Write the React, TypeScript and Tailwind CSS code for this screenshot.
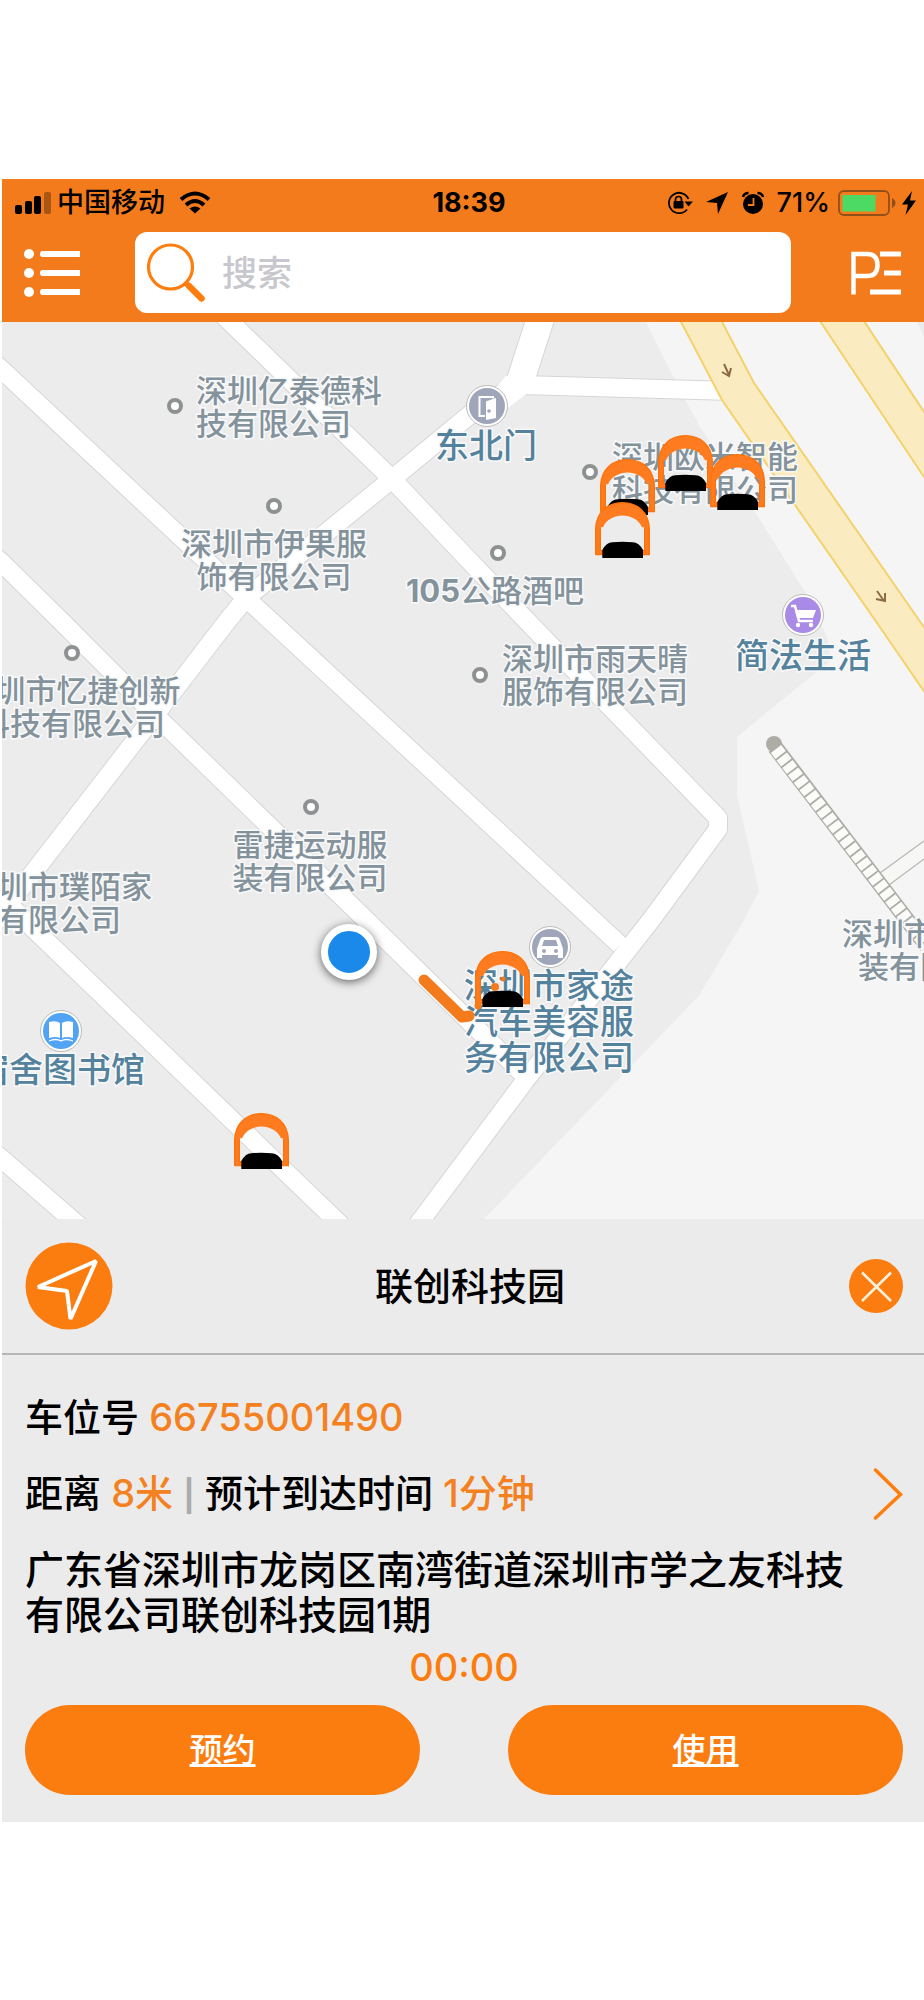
import { useState } from "react";

// 地图道路中心线
const roads = [
  "M-10 39 L0 48 L244 276 L460 476 L618 623",
  "M220 -8 L390 157 L460 231 L524 298 L716 496 V507 L649 598 L522 760 L411 909",
  "M-10 232 L0 241 L58 298 L153 393 L364 598 L522 753",
  "M518 60 L470 91 L390 157 L244 276 L226 298 L153 393 L-10 604",
  "M-10 567 L0 576 L35 610 L345 909",
  "M-10 829 L0 837 L83 909",
  "M520 63 L730 69",
];

const dots = [
  [173, 84],
  [272, 184],
  [496, 231],
  [588, 150],
  [70, 331],
  [309, 485],
  [478, 353],
];

const labels = [
  { x: 194, y: 52, lines: ["深圳亿泰德科", "技有限公司"], left: true },
  { x: 272, y: 205, lines: ["深圳市伊果服", "饰有限公司"] },
  { x: 500, y: 320, lines: ["深圳市雨天晴", "服饰有限公司"], left: true },
  { x: 610, y: 118, lines: ["深圳欧米智能", "科技有限公司"], left: true },
  { x: 70, y: 352, lines: ["深圳市忆捷创新", "科技有限公司"] },
  { x: 308, y: 506, lines: ["雷捷运动服", "装有限公司"] },
  { x: 57, y: 548, lines: ["深圳市璞陌家", "有限公司"] },
];

const places = [
  { x: 484, y: 106, lines: ["东北门"] },
  { x: 801, y: 316, lines: ["简法生活"] },
  { x: 547, y: 646, lines: ["深圳市家途", "汽车美容服", "务有限公司"] },
  { x: 58, y: 730, lines: ["宿舍图书馆"] },
];

const lots = [
  { x: 656, y: 113 },
  { x: 708, y: 132 },
  { x: 598, y: 137 },
  { x: 593, y: 180 },
  { x: 473, y: 629 },
  { x: 232, y: 791 },
];

function MapBase() {
  return (
    <svg
      className="absolute left-0 top-0"
      width="922"
      height="897"
      viewBox="0 0 922 897"
      aria-hidden="true"
    >
      <rect width="922" height="897" fill="#ececec" />
      <path
        d="M644 0 L673 58 L698 105 L760 201 L808 278 L825 315 L829 338 L735 415 V473 L757 569 L742 598 L698 672 L690 681 L482 897 H922 V15 L915 0 Z"
        fill="#f5f5f5"
      />

      {/* 道路 */}
      <g fill="none" strokeLinejoin="round">
        <path d="M540 -8 L516 66" stroke="#d6d6d6" strokeWidth="29" />
        {roads.map((d) => (
          <path key={d} d={d} stroke="#d6d6d6" strokeWidth="20" />
        ))}
        <path d="M540 -8 L516 66" stroke="#fff" strokeWidth="27" />
        {roads.map((d) => (
          <path key={d} d={d} stroke="#fff" strokeWidth="18" />
        ))}
      </g>
      <path d="M504 54 L532 54 L524 72 L502 89 L478 84 Z" fill="#fff" />

      {/* 主干道 */}
      <g fill="#faecc0" stroke="#f3d26c" strokeWidth="2">
        <path d="M677 -4 L720 78 L873 298 L930 381 V316 L917 298 L752 61 L718 -4 Z" />
        <path d="M816 -4 L930 167 V102 L860 -4 Z" />
      </g>
      <g fill="none" stroke="#8b6b48" strokeWidth="2">
        <path d="M722 42 L727 53 M720 50 L727 54 L729 46" />
        <path d="M875 269 L882 279 M874 277 L883 279 L883 271" />
      </g>

      {/* 铁路 */}
      <path d="M878 551 L922 519 V537 L887 563 Z" fill="#f7f7f5" />
      <path
        d="M878 551 L922 519 M887 563 L922 537"
        stroke="#b9b8b3"
        strokeWidth="1.3"
      />
      <path d="M773 425 L925 624" stroke="#adada6" strokeWidth="16" />
      <circle cx="772" cy="422" r="8" fill="#adada6" />
      <path
        d="M774 427 L925 624"
        stroke="#fbfbfa"
        strokeWidth="13"
        strokeDasharray="7.6 1.8"
      />

      {dots.map(([x, y]) => (
        <circle
          key={`${x}-${y}`}
          cx={x}
          cy={y}
          r="6"
          fill="#fff"
          stroke="#8d9191"
          strokeWidth="4"
        />
      ))}
    </svg>
  );
}

function MapLabel({
  x,
  y,
  lines,
  left,
  place,
}: {
  x: number;
  y: number;
  lines: string[];
  left?: boolean;
  place?: boolean;
}) {
  return (
    <div
      className={`absolute whitespace-nowrap font-medium [-webkit-text-stroke:3px_#f8f9fa] [paint-order:stroke] ${
        left ? "" : "-translate-x-1/2 text-center"
      } ${
        place
          ? "text-[34px] leading-[36px] text-[#54829c]"
          : "text-[31px] leading-[33px] text-[#84929b]"
      }`}
      style={{ left: x, top: y }}
    >
      {lines.map((line) => (
        <p key={line}>{line}</p>
      ))}
    </div>
  );
}

function PlaceIcons() {
  return (
    <svg
      className="absolute left-0 top-0"
      width="922"
      height="897"
      viewBox="0 0 922 897"
      aria-hidden="true"
    >
      {/* 门 */}
      <g transform="translate(485 84)">
        <circle r="20.5" fill="#fff" stroke="#bcbcbc" />
        <circle r="18" fill="#a0a6b9" />
        <path d="M-2 10 H-7.5 V-9 H7" fill="none" stroke="#fff" strokeWidth="2" />
        <path d="M-1 -6 L9 -8 V12 L-1 14 Z" fill="#fff" />
        <path d="M-5 -7 H6 L-3 -4 V9 H-5 Z" fill="#a0a6b9" />
        <circle cx="2" cy="5" r="1.8" fill="#a0a6b9" />
      </g>
      {/* 购物车 */}
      <g transform="translate(801 293)">
        <circle r="20.5" fill="#fff" stroke="#bcbcbc" />
        <circle r="18" fill="#a98ae6" />
        <path d="M-12 -9 H-8 L-4 6 H10" fill="none" stroke="#fff" strokeWidth="2.5" />
        <path d="M-8 -5 H13 L10 3 H-6 Z" fill="#fff" />
        <circle cx="-5" cy="10" r="2.2" fill="#fff" />
        <circle cx="8" cy="10" r="2.2" fill="#fff" />
      </g>
      {/* 汽车 */}
      <g transform="translate(548 625)">
        <circle r="20.5" fill="#fff" stroke="#bcbcbc" />
        <circle r="18" fill="#a0a6b9" />
        <path
          d="M-7 -10 H7 Q9 -10 10 -7 L12 -1 Q13 1 13 3 V11 H8 V8 H-8 V11 H-13 V3 Q-13 1 -12 -1 L-10 -7 Q-9 -10 -7 -10 Z"
          fill="#fff"
        />
        <path d="M-6 -7 H6 L8 -1 H-8 Z" fill="#a0a6b9" />
        <circle cx="-6" cy="4" r="2" fill="#a0a6b9" />
        <circle cx="6" cy="4" r="2" fill="#a0a6b9" />
      </g>
      {/* 图书馆 */}
      <g transform="translate(59 709)">
        <circle r="20.5" fill="#fff" stroke="#bcbcbc" />
        <circle r="18" fill="#51a3f4" />
        <path
          d="M-12 -9 Q-5 -11 -1 -8 V7 Q-5 5 -12 7 Z M12 -9 Q5 -11 1 -8 V7 Q5 5 12 7 Z"
          fill="#fff"
        />
        <path
          d="M-12 10 Q-5 7 0 10 Q5 7 12 10"
          fill="none"
          stroke="#fff"
          strokeWidth="1.3"
        />
      </g>
    </svg>
  );
}

function LotMarker({ x, y }: { x: number; y: number }) {
  return (
    <button
      type="button"
      aria-label="车位"
      className="absolute"
      style={{ left: x, top: y }}
    >
      <svg width="55" height="56" viewBox="0 0 165 168">
        <path
          d="M2 158 V80 C4 28 40 2 82 2 C125 2 161 28 163 80 V158 H140 V146 H149 V76 H141 C120 29 45 29 24 76 H16 V146 H26 V158 Z"
          fill="#fe7c1f"
        />
        <path
          d="M2 158 V80 C4 28 40 2 82 2 C125 2 161 28 163 80 V158 H140 V146 H149 V76 M16 76 V146 H26 V158 H2"
          fill="none"
          stroke="#fe7208"
          strokeWidth="4"
        />
        <path
          d="M22 168 V144 Q34 122 52 121 Q82 117 113 121 Q132 122 144 144 V168 Z"
          fill="#000"
        />
      </svg>
    </button>
  );
}

function StatusBar() {
  return (
    <div className="grid h-[47px] grid-cols-[1fr_auto_1fr] items-center pl-3 pr-2 text-[27px] leading-8 text-black">
      <div className="flex items-center">
        <svg width="37" height="24" viewBox="0 0 37 24" aria-hidden="true">
          <rect x="1" y="14" width="7" height="9" rx="2" />
          <rect x="11" y="10" width="7" height="13" rx="2" />
          <rect x="20" y="5" width="7" height="18" rx="2" />
          <rect x="30" y="1" width="7" height="22" rx="2" opacity="0.3" />
        </svg>
        <span className="ml-1.5 font-medium">中国移动</span>
        <svg
          className="ml-3.5"
          width="32"
          height="24"
          viewBox="0 0 32 24"
          fill="none"
          stroke="#000"
          strokeWidth="4"
          aria-hidden="true"
        >
          <path d="M2 8.5 Q16 -3.5 30 8.5" />
          <path d="M7 14 Q16 6 25 14" />
          <path d="M16 22.5 L10.5 17.5 Q16 13.5 21.5 17.5 Z" fill="#000" stroke="none" />
        </svg>
      </div>
      <span className="pl-2 font-bold">18:39</span>
      <div className="flex items-center justify-end">
        <svg width="26" height="24" viewBox="0 0 26 24" aria-hidden="true">
          <path
            d="M20 18.5 A10.2 10.2 0 1 1 21.5 8"
            fill="none"
            stroke="#000"
            strokeWidth="1.8"
          />
          <path d="M17.5 10.5 H26 L21.5 15.5 Z" />
          <rect x="6.5" y="10" width="10" height="7.5" rx="1" />
          <path
            d="M8.5 10.5 V8.5 A3 3 0 0 1 14.5 8.5 V10.5"
            fill="none"
            stroke="#000"
            strokeWidth="1.7"
          />
        </svg>
        <svg className="ml-3" width="24" height="24" viewBox="0 0 24 24" aria-hidden="true">
          <path d="M23 1 L13 23 L12 12 L1 11 Z" />
        </svg>
        <svg className="ml-3" width="24" height="24" viewBox="0 0 24 24" aria-hidden="true">
          <circle cx="12" cy="13" r="10" />
          <path d="M12.5 7 V14 H7" fill="none" stroke="#f47b1b" strokeWidth="1.8" />
          <path
            d="M2 6 Q3 2 7.5 2 M22 6 Q21 2 16.5 2"
            fill="none"
            stroke="#000"
            strokeWidth="2.5"
          />
        </svg>
        <span className="ml-3 font-medium">71%</span>
        <svg className="ml-2" width="58" height="26" viewBox="0 0 58 26" aria-hidden="true">
          <rect
            x="1"
            y="1"
            width="50"
            height="24"
            rx="5"
            fill="none"
            stroke="#91501a"
            strokeWidth="1.8"
          />
          <rect x="4.5" y="5" width="33" height="16.5" fill="#4cd964" />
          <path d="M54 8 Q57.5 10 57.5 13 Q57.5 16 54 18 Z" fill="#91501a" />
        </svg>
        <svg className="ml-1.5" width="14" height="24" viewBox="0 0 14 24" aria-hidden="true">
          <path d="M10 0 L0 13.5 H6 L3.5 24 L14 9.5 H8 Z" />
        </svg>
      </div>
    </div>
  );
}

export default function App() {
  const [keyword, setKeyword] = useState("");
  const [open, setOpen] = useState(true);

  return (
    <div className="min-h-screen bg-white py-[179px] pl-0.5 font-['Inter','Noto_Sans_CJK_SC',sans-serif]">
      <header className="bg-[#f47b1b] pb-[9px]">
        <StatusBar />
        <div className="flex items-center pl-[22px] pr-[23px] pt-1.5">
          <button type="button" aria-label="菜单">
            <svg width="56" height="48" viewBox="0 0 56 48" fill="#fff">
              <circle cx="5" cy="5" r="5" />
              <circle cx="5" cy="24" r="5" />
              <circle cx="5" cy="43" r="5" />
              <path d="M18.5 2 H56 V8 H18.5 Q16 8 16 5 Q16 2 18.5 2 Z" />
              <path d="M18.5 21 H56 V27 H18.5 Q16 27 16 24 Q16 21 18.5 21 Z" />
              <path d="M18.5 40 H56 V46 H18.5 Q16 46 16 43 Q16 40 18.5 40 Z" />
            </svg>
          </button>
          <label className="ml-[55px] mr-[60px] flex h-[81px] min-w-0 flex-1 items-center rounded-xl bg-white pl-3">
            <svg
              width="59"
              height="60"
              viewBox="0 0 59 60"
              fill="none"
              stroke="#fe7d0d"
              aria-hidden="true"
            >
              <circle cx="23.5" cy="24" r="22" strokeWidth="3.2" />
              <path d="M38.5 40 L42 43" strokeWidth="5" />
              <path d="M42 43 L54.5 55.5" strokeWidth="6.5" strokeLinecap="round" />
            </svg>
            <input
              type="text"
              aria-label="搜索"
              placeholder="搜索"
              className="ml-4 min-w-0 flex-1 bg-transparent text-[35px] font-medium leading-[50px] text-black outline-none placeholder:text-[#c7c7cd]"
              value={keyword}
              onChange={(e) => setKeyword(e.target.value)}
            />
          </label>
          <button type="button" aria-label="停车">
            <svg
              width="50"
              height="44"
              viewBox="0 0 50 44"
              fill="none"
              stroke="#fff"
              strokeWidth="4.5"
            >
              <path d="M2.5 43.5 V3 H16 Q26.5 3 26.5 14 Q26.5 25 16 25 H2.5" />
              <path d="M29 3 H50 M33 22 H50 M19 41 H50" strokeWidth="5" />
            </svg>
          </button>
        </div>
      </header>

      <main>
        <section
          aria-label="地图"
          className="relative h-[897px] overflow-hidden bg-[#ececec]"
        >
          <MapBase />
          {labels.map((label) => (
            <MapLabel key={label.lines[0]} {...label} />
          ))}
          <p className="absolute left-[404px] top-[252px] whitespace-nowrap text-[31px] font-medium leading-[33px] text-[#84929b] [-webkit-text-stroke:3px_#f8f9fa] [paint-order:stroke]">
            <span className="font-bold">105</span>公路酒吧
          </p>
          <div className="absolute left-[840px] top-[595px] whitespace-nowrap text-[31px] font-medium leading-[33px] text-[#84929b] [-webkit-text-stroke:3px_#f8f9fa] [paint-order:stroke]">
            <p>深圳市</p>
            <p className="pl-4">装有限</p>
          </div>
          {places.map((place) => (
            <MapLabel key={place.lines[0]} {...place} place />
          ))}
          <PlaceIcons />

          {lots.map((lot) => (
            <LotMarker key={`${lot.x}-${lot.y}`} {...lot} />
          ))}

          {/* 导航路线 */}
          <svg
            className="pointer-events-none absolute left-0 top-0"
            width="922"
            height="897"
            viewBox="0 0 922 897"
            aria-hidden="true"
          >
            <path
              d="M422 658 L460 695 L467 694"
              fill="none"
              stroke="#f47b1b"
              strokeWidth="11"
              strokeLinecap="round"
              strokeLinejoin="round"
            />
            <circle cx="476" cy="684" r="3.5" fill="#f47b1b" />
            <circle cx="493" cy="665" r="4" fill="#f47b1b" />
            <circle cx="501" cy="657" r="2.5" fill="#f47b1b" />
          </svg>

          <div className="absolute left-[319px] top-[602px] h-14 w-14 rounded-full border-[7px] border-white bg-[#1a89ea] shadow-[0_2px_10px_rgba(0,0,0,0.6)]" />
        </section>

        {open && (
          <section className="bg-[#ebebeb]">
            <div className="flex items-center border-b-2 border-[#b5b5b5] pl-[23px] pr-[21px] py-[23px]">
              <button type="button" aria-label="导航">
                <svg width="88" height="88" viewBox="0 0 88 88">
                  <circle cx="44" cy="44" r="43.5" fill="#fb7d0f" />
                  <path
                    d="M71 19 L13 45 L42 49 L45.5 77 Z"
                    fill="none"
                    stroke="#fff"
                    strokeWidth="4"
                    strokeLinejoin="bevel"
                  />
                </svg>
              </button>
              <h1 className="flex-1 text-center text-[38px] font-medium leading-[46px] text-black">
                联创科技园
              </h1>
              <button
                type="button"
                aria-label="关闭"
                className="flex w-[76px] justify-end"
                onClick={() => setOpen(false)}
              >
                <svg width="54" height="54" viewBox="0 0 54 54">
                  <circle cx="27" cy="27" r="27" fill="#fb7d0f" />
                  <path
                    d="M13 13.5 L42 42 M42 13.5 L13 42"
                    stroke="#fff2e0"
                    strokeWidth="2.5"
                  />
                </svg>
              </button>
            </div>

            <div className="pb-[27px] pl-[23px] pr-[21px] pt-[39px] text-[38px] font-medium leading-[46px] text-black">
              <p>
                车位号 <span className="text-[#f4811f]">66755001490</span>
              </p>
              <div className="mt-7 flex items-center justify-between">
                <p>
                  距离 <span className="text-[#f4811f]">8米</span>{" "}
                  <span className="text-[31px] font-bold text-[#ababab]">|</span>{" "}
                  预计到达时间 <span className="text-[#f4811f]">1分钟</span>
                </p>
                <button type="button" aria-label="详情">
                  <svg
                    width="30"
                    height="52"
                    viewBox="0 0 30 52"
                    fill="none"
                    stroke="#fe7d0d"
                    strokeWidth="3.5"
                    strokeLinecap="round"
                  >
                    <path d="M2.5 2 L27.5 26.5 L2.5 50" />
                  </svg>
                </button>
              </div>
              <p className="mt-[27px] pr-11 text-[39px] leading-[45px]">
                广东省深圳市龙岗区南湾街道深圳市学之友科技有限公司联创科技园1期
              </p>
              <p className="mt-2 text-center leading-[44px] text-[#fb7d0f]">
                00:00
              </p>
              <div className="mt-4 grid grid-cols-2 gap-[88px] text-[33px] leading-[46px] text-white">
                <button
                  type="button"
                  className="h-[90px] rounded-full bg-[#fb7d0f] underline"
                >
                  预约
                </button>
                <button
                  type="button"
                  className="h-[90px] rounded-full bg-[#fb7d0f] underline"
                >
                  使用
                </button>
              </div>
            </div>
          </section>
        )}
      </main>
    </div>
  );
}
